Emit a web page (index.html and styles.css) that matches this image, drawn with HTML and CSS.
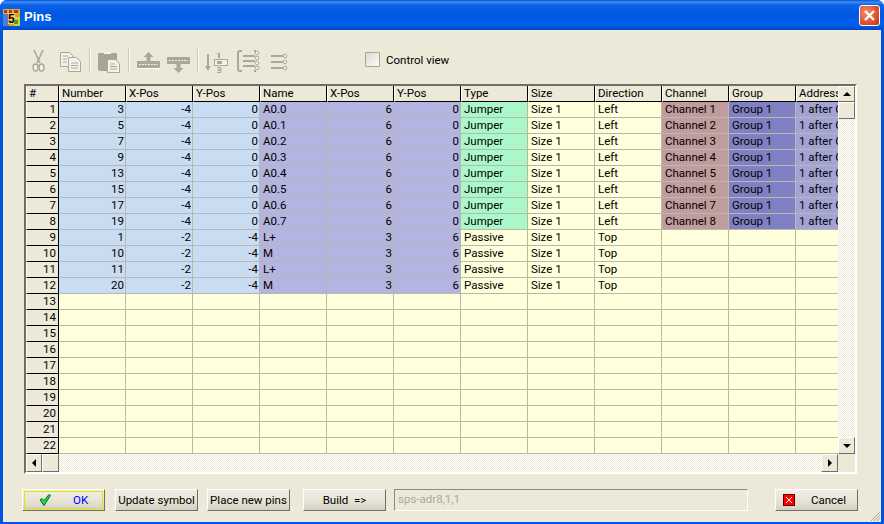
FILE: index.html
```html
<!DOCTYPE html>
<html lang="en">
<head>
  <meta charset="UTF-8">
  <title>Pins</title>
  <link rel="stylesheet" href="styles.css">
</head>
<body>
  <div class="window">
    <div class="titlebar">
      <svg class="app-icon" width="17" height="17" viewBox="0 0 17 17">
        <rect width="17" height="17" fill="#e8a020"/>
        <rect y="0" width="17" height="5" fill="#d8b040"/>
        <rect y="5" width="6" height="12" fill="#4a80d0"/>
        <rect x="11" y="8" width="6" height="9" fill="#d0d040"/>
        <path d="M1 1h3v3h-3zM6 1h3v3h-3zM11 1h4v3h-4z" fill="#c03020"/>
        <rect x="5" y="4" width="7" height="11" fill="#f0d060"/>
        <text x="5" y="14" class="app-five">5</text>
        <rect x="11" y="11" width="4" height="4" fill="#40a040"/>
      </svg>
      <span class="title-text">Pins</span>
      <button class="close-btn" aria-label="Close">
        <svg width="13" height="13" viewBox="0 0 13 13"><path d="M2 2l9 9M11 2l-9 9" stroke="#fff" stroke-width="2.4" fill="none"/></svg>
      </button>
    </div>

    <div class="client">
      <div class="toolbar">
        <svg class="tool tool-cut" width="13" height="22" viewBox="0 0 13 22">
          <path d="M2 0l6 13M11 0l-6 13" stroke="#aca899" stroke-width="1.6" fill="none"/>
          <ellipse cx="3.5" cy="17.5" rx="2.5" ry="3.5" stroke="#aca899" stroke-width="1.4" fill="#f4f2e8"/>
          <ellipse cx="9.5" cy="17.5" rx="2.5" ry="3.5" stroke="#aca899" stroke-width="1.4" fill="#f4f2e8"/>
        </svg>
        <svg class="tool tool-copy" width="23" height="20" viewBox="0 0 23 20">
          <path d="M1.5 .5h9l3 3v11h-12z" fill="#f4f2e8" stroke="#aca899"/>
          <path d="M9.5 5.5h8l4 4v10h-12z" fill="#f4f2e8" stroke="#aca899"/>
          <path d="M4 4h5M4 7h4M4 10h4M12 11h7M12 13.500h7M12 16h7" stroke="#aca899"/>
        </svg>
        <span class="tool-sep sep-a"></span>
        <svg class="tool tool-paste" width="24" height="23" viewBox="0 0 24 23">
          <path d="M2 3h17a1 1 0 0 1 1 1v17h-17a2 2 0 0 1 -2 -2v-15a1 1 0 0 1 1 -1z" fill="#a8a498"/>
          <path d="M7 2h7v2h-7z" fill="#f4f2e8"/>
          <path d="M10.500 9.500h8l4 4v9h-12z" fill="#f4f2e8" stroke="#aca899"/>
          <path d="M13 14h5M13 16.500h7M13 19h7" stroke="#aca899"/>
        </svg>
        <span class="tool-sep sep-b"></span>
        <svg class="tool tool-up" width="23" height="17" viewBox="0 0 23 17">
          <path d="M11.500 0l5 5h-3v4h-4v-4h-3z" fill="#aca899"/>
          <rect y="9" width="23" height="7" fill="#aca899"/>
          <path d="M2 12.500h19" stroke="#f4f2e8" stroke-dasharray="2 1"/>
          <path d="M0 16.500h23" stroke="#fff"/>
        </svg>
        <svg class="tool tool-down" width="23" height="16" viewBox="0 0 23 16">
          <rect y="0" width="23" height="7" fill="#aca899"/>
          <path d="M2 3.500h19" stroke="#f4f2e8" stroke-dasharray="2 1"/>
          <path d="M9.500 7h4v4h3l-5 5l-5 -5h3z" fill="#aca899"/>
        </svg>
        <span class="tool-sep sep-c"></span>
        <svg class="tool tool-sort" width="23" height="21" viewBox="0 0 23 21">
          <path d="M3 2v14" stroke="#aca899" stroke-width="2"/>
          <path d="M0 14h6l-3 5z" fill="#aca899"/>
          <path d="M13 1h2v5h-2zM12 1h1v1h-1z" fill="#aca899"/>
          <rect x="9.500" y="7.500" width="13" height="6" fill="#f4f2e8" stroke="#aca899"/>
          <rect x="12" y="9" width="5" height="3" fill="#aca899"/>
          <path d="M12 15.500h4v2h-3v1h3v2h-4" stroke="#aca899" fill="none"/>
        </svg>
        <svg class="tool tool-bracket" width="23" height="22" viewBox="0 0 23 22">
          <path d="M5 1h-2a2 2 0 0 0 -2 2v16a2 2 0 0 0 2 2h2M17 1h2M17 21h2" stroke="#aca899" stroke-width="2" fill="none"/>
          <path d="M6 6h12M6 11h12M6 16h12" stroke="#aca899" stroke-width="2"/>
          <circle cx="20" cy="3" r="1.800" fill="#f4f2e8" stroke="#aca899"/>
          <circle cx="20" cy="8" r="1.800" fill="#f4f2e8" stroke="#aca899"/>
          <circle cx="20" cy="13" r="1.800" fill="#f4f2e8" stroke="#aca899"/>
          <circle cx="20" cy="18" r="1.800" fill="#f4f2e8" stroke="#aca899"/>
        </svg>
        <svg class="tool tool-list" width="17" height="18" viewBox="0 0 17 18">
          <path d="M0 3h12M0 9h12M0 15h12" stroke="#aca899" stroke-width="2"/>
          <circle cx="14" cy="3" r="1.800" fill="#f4f2e8" stroke="#aca899"/>
          <circle cx="14" cy="9" r="1.800" fill="#f4f2e8" stroke="#aca899"/>
          <circle cx="14" cy="15" r="1.800" fill="#f4f2e8" stroke="#aca899"/>
        </svg>
        <label class="control-view"><span class="check-box"></span>Control view</label>
      </div>

      <div class="grid-frame">
        <div class="grid-top">
          <div class="grid-clip">
            <table class="pin-table">
              <thead>
                <tr><th class="col-index">#</th><th>Number</th><th>X-Pos</th><th>Y-Pos</th><th>Name</th><th>X-Pos</th><th>Y-Pos</th><th>Type</th><th>Size</th><th>Direction</th><th>Channel</th><th>Group</th><th>Address</th></tr>
              </thead>
              <tbody>
                <tr><th>1</th><td class="blue r">3</td><td class="blue r">-4</td><td class="blue r">0</td><td class="violet">A0.0</td><td class="violet r">6</td><td class="violet r">0</td><td class="green">Jumper</td><td>Size 1</td><td>Left</td><td class="rose">Channel 1</td><td class="indigo">Group 1</td><td class="lilac">1 after G</td></tr>
                <tr><th>2</th><td class="blue r">5</td><td class="blue r">-4</td><td class="blue r">0</td><td class="violet">A0.1</td><td class="violet r">6</td><td class="violet r">0</td><td class="green">Jumper</td><td>Size 1</td><td>Left</td><td class="rose">Channel 2</td><td class="indigo">Group 1</td><td class="lilac">1 after G</td></tr>
                <tr><th>3</th><td class="blue r">7</td><td class="blue r">-4</td><td class="blue r">0</td><td class="violet">A0.2</td><td class="violet r">6</td><td class="violet r">0</td><td class="green">Jumper</td><td>Size 1</td><td>Left</td><td class="rose">Channel 3</td><td class="indigo">Group 1</td><td class="lilac">1 after G</td></tr>
                <tr><th>4</th><td class="blue r">9</td><td class="blue r">-4</td><td class="blue r">0</td><td class="violet">A0.3</td><td class="violet r">6</td><td class="violet r">0</td><td class="green">Jumper</td><td>Size 1</td><td>Left</td><td class="rose">Channel 4</td><td class="indigo">Group 1</td><td class="lilac">1 after G</td></tr>
                <tr><th>5</th><td class="blue r">13</td><td class="blue r">-4</td><td class="blue r">0</td><td class="violet">A0.4</td><td class="violet r">6</td><td class="violet r">0</td><td class="green">Jumper</td><td>Size 1</td><td>Left</td><td class="rose">Channel 5</td><td class="indigo">Group 1</td><td class="lilac">1 after G</td></tr>
                <tr><th>6</th><td class="blue r">15</td><td class="blue r">-4</td><td class="blue r">0</td><td class="violet">A0.5</td><td class="violet r">6</td><td class="violet r">0</td><td class="green">Jumper</td><td>Size 1</td><td>Left</td><td class="rose">Channel 6</td><td class="indigo">Group 1</td><td class="lilac">1 after G</td></tr>
                <tr><th>7</th><td class="blue r">17</td><td class="blue r">-4</td><td class="blue r">0</td><td class="violet">A0.6</td><td class="violet r">6</td><td class="violet r">0</td><td class="green">Jumper</td><td>Size 1</td><td>Left</td><td class="rose">Channel 7</td><td class="indigo">Group 1</td><td class="lilac">1 after G</td></tr>
                <tr><th>8</th><td class="blue r">19</td><td class="blue r">-4</td><td class="blue r">0</td><td class="violet">A0.7</td><td class="violet r">6</td><td class="violet r">0</td><td class="green">Jumper</td><td>Size 1</td><td>Left</td><td class="rose">Channel 8</td><td class="indigo">Group 1</td><td class="lilac">1 after G</td></tr>
                <tr><th>9</th><td class="blue r">1</td><td class="blue r">-2</td><td class="blue r">-4</td><td class="violet">L+</td><td class="violet r">3</td><td class="violet r">6</td><td>Passive</td><td>Size 1</td><td>Top</td><td></td><td></td><td></td></tr>
                <tr><th>10</th><td class="blue r">10</td><td class="blue r">-2</td><td class="blue r">-4</td><td class="violet">M</td><td class="violet r">3</td><td class="violet r">6</td><td>Passive</td><td>Size 1</td><td>Top</td><td></td><td></td><td></td></tr>
                <tr><th>11</th><td class="blue r">11</td><td class="blue r">-2</td><td class="blue r">-4</td><td class="violet">L+</td><td class="violet r">3</td><td class="violet r">6</td><td>Passive</td><td>Size 1</td><td>Top</td><td></td><td></td><td></td></tr>
                <tr><th>12</th><td class="blue r">20</td><td class="blue r">-2</td><td class="blue r">-4</td><td class="violet">M</td><td class="violet r">3</td><td class="violet r">6</td><td>Passive</td><td>Size 1</td><td>Top</td><td></td><td></td><td></td></tr>
                <tr><th>13</th><td></td><td></td><td></td><td></td><td></td><td></td><td></td><td></td><td></td><td></td><td></td><td></td></tr>
                <tr><th>14</th><td></td><td></td><td></td><td></td><td></td><td></td><td></td><td></td><td></td><td></td><td></td><td></td></tr>
                <tr><th>15</th><td></td><td></td><td></td><td></td><td></td><td></td><td></td><td></td><td></td><td></td><td></td><td></td></tr>
                <tr><th>16</th><td></td><td></td><td></td><td></td><td></td><td></td><td></td><td></td><td></td><td></td><td></td><td></td></tr>
                <tr><th>17</th><td></td><td></td><td></td><td></td><td></td><td></td><td></td><td></td><td></td><td></td><td></td><td></td></tr>
                <tr><th>18</th><td></td><td></td><td></td><td></td><td></td><td></td><td></td><td></td><td></td><td></td><td></td><td></td></tr>
                <tr><th>19</th><td></td><td></td><td></td><td></td><td></td><td></td><td></td><td></td><td></td><td></td><td></td><td></td></tr>
                <tr><th>20</th><td></td><td></td><td></td><td></td><td></td><td></td><td></td><td></td><td></td><td></td><td></td><td></td></tr>
                <tr><th>21</th><td></td><td></td><td></td><td></td><td></td><td></td><td></td><td></td><td></td><td></td><td></td><td></td></tr>
                <tr><th>22</th><td></td><td></td><td></td><td></td><td></td><td></td><td></td><td></td><td></td><td></td><td></td><td></td></tr>
              </tbody>
            </table>
          </div>
          <div class="vscroll">
            <div class="sb-btn sb-head"><span class="arrow arrow-up"></span></div>
            <div class="sb-btn sb-vthumb"></div>
            <div class="sb-track"></div>
            <div class="sb-btn sb-foot"><span class="arrow arrow-down"></span></div>
          </div>
        </div>
        <div class="hscroll">
          <div class="sb-btn sb-left"><span class="arrow arrow-left"></span></div>
          <div class="sb-btn sb-hthumb"></div>
          <div class="sb-track"></div>
          <div class="sb-btn sb-right"><span class="arrow arrow-right"></span></div>
          <div class="sb-corner"></div>
        </div>
      </div>

      <div class="footer">
        <button class="btn btn-ok">
          <svg width="12" height="12" viewBox="0 0 12 12"><path d="M1 6l2 -1.500l2 2l5 -6l1.500 1l-6.500 10z" fill="#20e020" stroke="#064" stroke-width="1"/></svg>
          <span class="ok-label">OK</span>
        </button>
        <button class="btn btn-update">Update symbol</button>
        <button class="btn btn-place">Place new pins</button>
        <button class="btn btn-build">Build &nbsp;=&gt;</button>
        <div class="name-field">sps-adr8,1,1</div>
        <button class="btn btn-cancel">
          <svg width="12" height="12" viewBox="0 0 12 12"><rect x=".5" y=".5" width="11" height="11" fill="#f00" stroke="#600"/><path d="M3 3l6 6M9 3l-6 6" stroke="#fff"/></svg>
          <span class="cancel-label">Cancel</span>
        </button>
      </div>
      <svg class="grip" width="11" height="11" viewBox="0 0 11 11"><path d="M10 1l-9 9M10 4l-6 6M10 7l-3 3" stroke="#aca899" fill="none"/></svg>
    </div>
  </div>
</body>
</html>
```

FILE: styles.css
```css
html, body {
  margin: 0;
  padding: 0;
  background: #fff;
}
body {
  font-family: Roboto, "Liberation Sans", sans-serif;
  font-size: 11.5px;
  color: #000;
}
.window {
  width: 884px;
  height: 524px;
  display: flex;
  flex-direction: column;
  background: #0054e3;
  border-radius: 7px 7px 0 0;
  overflow: hidden;
  box-sizing: border-box;
  padding: 0 3px 2px 3px;
}

/* title bar */
.titlebar {
  height: 30px;
  margin: 0 -3px;
  flex-shrink: 0;
  display: flex;
  align-items: center;
  padding-left: 3px;
  box-sizing: border-box;
  background: linear-gradient(to bottom, #0a4fd0 0, #3a8cf5 2px, #0a62e6 5px, #0058e0 14px, #0060ec 24px, #0050d8 28px, #0046c0 30px);
}
.app-icon {
  margin-top: 4px;
}
.app-five {
  font-family: "Liberation Sans", sans-serif;
  font-size: 12px;
  font-weight: bold;
  fill: #200;
}
.title-text {
  margin-left: 4px;
  margin-top: 3px;
  color: #fff;
  font-family: "Liberation Sans", sans-serif;
  font-weight: bold;
  font-size: 13px;
}
.close-btn {
  margin-left: auto;
  margin-right: 4px;
  margin-top: 1px;
  width: 21px;
  height: 21px;
  padding: 0;
  border: 1px solid #fff;
  border-radius: 3px;
  background: radial-gradient(circle at 35% 35%, #f09070, #e0502a 60%, #c03010);
  display: flex;
  align-items: center;
  justify-content: center;
}

/* dialog area */
.client {
  position: relative;
  flex: 1;
  background: #ece9d8;
  display: flex;
  flex-direction: column;
}
.toolbar {
  height: 54px;
  flex-shrink: 0;
  display: flex;
  align-items: flex-start;
}
.tool {
  display: block;
  flex-shrink: 0;
}
.tool-cut { margin: 20px 0 0 29px; }
.tool-copy { margin: 22px 0 0 14px; }
.tool-sep {
  width: 1px;
  height: 24px;
  margin-top: 19px;
  background: #c8c5b4;
  border-right: 1px solid #fff;
  flex-shrink: 0;
}
.sep-a { margin-left: 7px; }
.tool-paste { margin: 20px 0 0 6px; }
.sep-b { margin-left: 7px; }
.tool-up { margin: 22px 0 0 7px; }
.tool-down { margin: 27px 0 0 7px; }
.sep-c { margin-left: 7px; }
.tool-sort { margin: 22px 0 0 6px; }
.tool-bracket { margin: 20px 0 0 9px; }
.tool-list { margin: 23px 0 0 11px; }
.control-view {
  display: flex;
  align-items: center;
  margin: 22px 0 0 77px;
  height: 15px;
}
.check-box {
  width: 13px;
  height: 13px;
  margin-right: 6px;
  border: 1px solid #a8a498;
  border-radius: 1px;
  background: linear-gradient(135deg, #dcdcd4, #fafafa);
}

/* grid */
.grid-frame {
  width: 833px;
  height: 390px;
  margin-left: 21px;
  box-sizing: border-box;
  border-top: 2px solid #716f64;
  border-left: 2px solid #716f64;
  border-right: 2px solid #fff;
  border-bottom: 2px solid #fff;
  display: flex;
  flex-direction: column;
  flex-shrink: 0;
}
.grid-top {
  display: flex;
  height: 368px;
}
.grid-clip {
  width: 812px;
  height: 368px;
  overflow: hidden;
}
.pin-table {
  table-layout: fixed;
  border-collapse: separate;
  border-spacing: 0;
  width: 836px;
}
.pin-table th,
.pin-table td {
  height: 16px;
  box-sizing: border-box;
  padding: 0 3px;
  font-weight: normal;
  line-height: 15px;
  white-space: nowrap;
  overflow: hidden;
}
.pin-table th {
  width: 67px;
  text-align: left;
  background: #ece9d8;
  border-right: 1px solid #000;
  border-bottom: 1px solid #000;
  border-left: 1px solid #fff;
  padding-left: 2px;
}
.pin-table th.col-index {
  width: 33px;
}
.pin-table tbody th {
  text-align: right;
  padding-right: 2px;
}
.pin-table td {
  background: #ffffdc;
  border-right: 1px solid #b8b8ac;
  border-bottom: 1px solid #b8b8ac;
}
.pin-table td.r { text-align: right; padding-right: 1px; }
.pin-table td.blue { background: #c8dcf4; }
.pin-table td.violet { background: #b4b4e2; }
.pin-table td.green { background: #aaf8c8; }
.pin-table td.rose { background: #c09c9c; }
.pin-table td.indigo { background: #8080c4; }
.pin-table td.lilac { background: #a4a4d4; }

/* scrollbars */
.sb-btn {
  background: #ece9d8;
  border-top: 1px solid #fff;
  border-left: 1px solid #fff;
  border-right: 1px solid #716f64;
  border-bottom: 1px solid #716f64;
  box-sizing: border-box;
  display: flex;
  align-items: center;
  justify-content: center;
  flex-shrink: 0;
}
.sb-track {
  flex: 1;
  background-color: #fff;
  background-image: conic-gradient(#ece9d8 25%, #fff 0 50%, #ece9d8 0 75%, #fff 0);
  background-size: 2px 2px;
}
.vscroll {
  width: 17px;
  display: flex;
  flex-direction: column;
}
.sb-head { height: 16px; }
.sb-vthumb { height: 17px; }
.sb-foot { height: 17px; }
.hscroll {
  height: 18px;
  display: flex;
}
.sb-left { width: 16px; }
.sb-hthumb { width: 17px; }
.sb-right { width: 17px; }
.sb-corner {
  width: 17px;
  background: #ece9d8;
}
.arrow {
  width: 0;
  height: 0;
  border-style: solid;
  border-color: transparent;
}
.arrow-up { border-width: 0 4px 4px; border-bottom-color: #000; }
.arrow-down { border-width: 4px 4px 0; border-top-color: #000; }
.arrow-left { border-width: 4px 4px 4px 0; border-right-color: #000; }
.arrow-right { border-width: 4px 0 4px 4px; border-left-color: #000; }

/* bottom buttons */
.footer {
  display: flex;
  align-items: flex-start;
  margin-top: 15px;
  margin-left: 19px;
}
.btn {
  width: 83px;
  height: 22px;
  padding: 0;
  font: inherit;
  color: #000;
  background: linear-gradient(to bottom, #f0eee4 0, #e8e5d8 50%, #d4d0c4 100%);
  border: 1px solid;
  border-color: #fff #716f64 #716f64 #fff;
  flex-shrink: 0;
  display: flex;
  align-items: center;
  justify-content: center;
  white-space: nowrap;
}
.btn-ok {
  outline: 1px solid #e4e400;
  outline-offset: -3px;
  justify-content: flex-start;
  padding-left: 16px;
}
.ok-label {
  color: #0000ff;
  margin-left: 22px;
}
.btn-update { margin-left: 10px; }
.btn-place { margin-left: 9px; }
.btn-build { margin-left: 13px; }
.name-field {
  width: 354px;
  height: 22px;
  margin-left: 8px;
  box-sizing: border-box;
  border: 1px solid;
  border-color: #8c8a7c #fff #fff #8c8a7c;
  padding: 2px 0 0 3px;
  color: #aca899;
}
.btn-cancel {
  margin-left: 27px;
  justify-content: flex-start;
  padding-left: 7px;
}
.cancel-label { margin-left: 16px; }
.grip {
  position: absolute;
  right: 0;
  bottom: 0;
}
```
